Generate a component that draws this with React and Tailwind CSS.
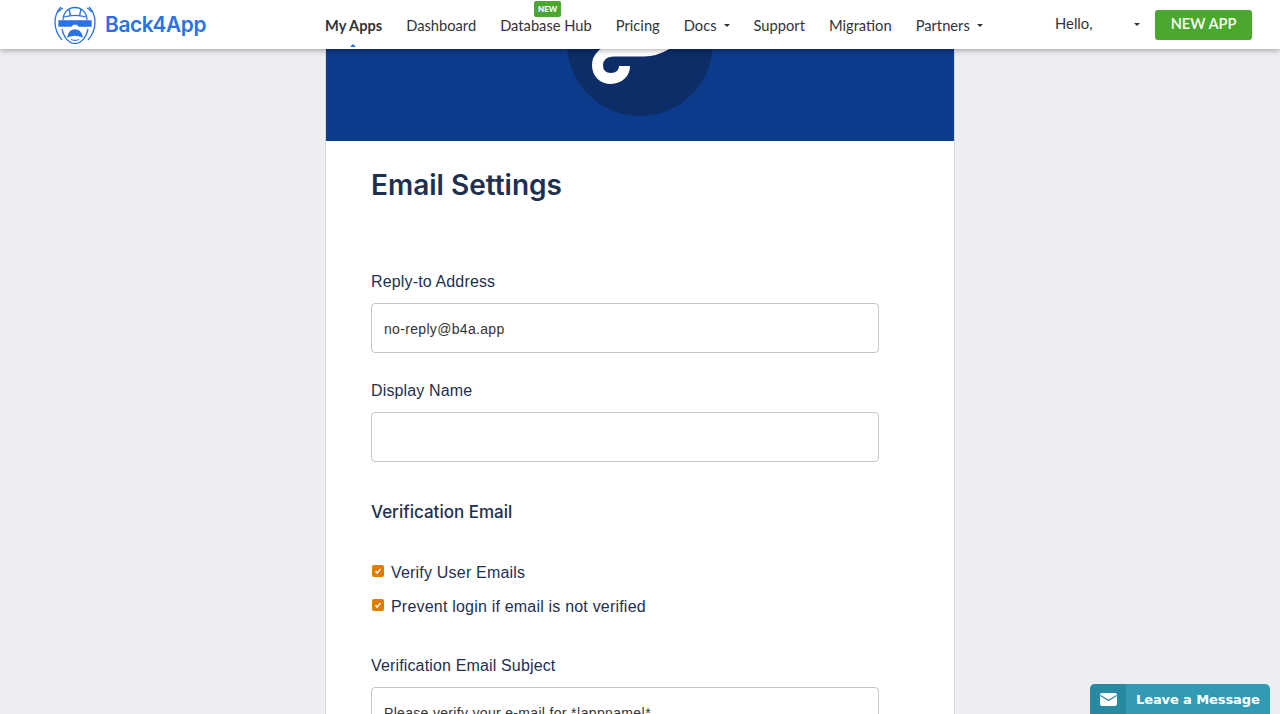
import React from "react";

const navLinks = [
  { label: "My Apps", active: true },
  { label: "Dashboard" },
  { label: "Database Hub", badge: true },
  { label: "Pricing" },
  { label: "Docs", caret: true },
  { label: "Support" },
  { label: "Migration" },
  { label: "Partners", caret: true },
];

const Caret = () => (
  <span className="inline-block w-0 h-0 border-x-[3px] border-x-transparent border-t-[3px] border-t-[#333]" />
);

const Logo = () => (
  <svg width="42" height="38" viewBox="0 0 42 38" fill="none" stroke="#2a72e5" strokeWidth="1.3">
    {/* outer arcs */}
    <path d="M7 1C3 5 1 10 1 16c0 7 2.500 13 7 18" />
    <path d="M35 1c4 4 6 9 6 15 0 7-2.500 13-7 18" />
    <path d="M4 6c2-2 3-3 5-4M38 6c-2-2-3-3-5-4" />
    {/* helmet dome */}
    <path d="M9 14C9 7 14 1.500 21 1.500S33 7 33 14" />
    <path d="M15 3l1.500 7M27 3l-1.500 7M10 11c7-2 15-2 22 0" />
    {/* visor */}
    <path d="M5 15h32v5H25l-2-2h-4l-2 2H5z" fill="#2a72e5" />
    {/* face */}
    <path d="M8 23c2 9 7 14.500 13 14.500S32 32 34 23" />
    <path d="M14 30.500c1-4 4-6.500 7-6.500s6 2.500 7 6.500c-3-.5-5-1.500-7-1.500s-4 1-7 1.500z" fill="#2a72e5" />
    <path d="M17 33.500c2 1 6 1 8 0" />
  </svg>
);

const Field = ({ label, value }) => (
  <div>
    <label className="block text-[16px] leading-[22px] tracking-[0.15px] text-[#1e3050]">{label}</label>
    <div className="mt-[10px] h-[50px] w-[508px] rounded-[4px] border border-[#c4c6c9] bg-white px-[12px] pt-[2px] flex items-center text-[14px] tracking-[0.32px] text-[#333]">
      {value}
    </div>
  </div>
);

const Check = ({ label }) => (
  <label className="flex items-center h-[24px] text-[16px] tracking-[0.2px] text-[#1e3050]">
    <span className="w-[12px] h-[12px] mb-[4px] ml-[1px] rounded-[2px] bg-[#e07b00] flex items-center justify-center mr-[7px]">
      <svg width="8" height="8" viewBox="0 0 8 8" fill="none" stroke="white" strokeWidth="1.5">
        <path d="M1.500 4.200L3.200 6L6.500 2" />
      </svg>
    </span>
    {label}
  </label>
);

export default function App() {
  return (
    <div className="h-[714px] overflow-hidden bg-[#edeef2] font-['Liberation_Sans',sans-serif]">
      <header className="relative z-10 h-[49px] bg-white shadow-[0_1px_6px_rgba(0,0,0,0.35)] flex items-center pl-[54px] pr-[28px]">
        <div className="w-[271px] flex items-center gap-[9px]">
          <Logo />
          <span className="font-['Inter',sans-serif] font-semibold text-[20.800px] text-[#2a72e5] tracking-[-0.3px]">Back4App</span>
        </div>
        <nav className="flex items-center gap-[24px] font-['Lato',sans-serif] text-[14.700px] text-[#333]">
          {navLinks.map((link) => (
            <a key={link.label} className={`relative flex items-center gap-[7px] h-[49px] pt-[2px] ${link.active ? "font-bold text-[14.600px]" : ""}`}>
              {link.label}
              {link.caret && <Caret />}
              {link.badge && (
                <span className="absolute top-[1px] left-[34px] w-[27px] h-[16px] rounded-[2px] bg-[#4ba82e] text-white text-[8px] font-black flex items-center justify-center">
                  NEW
                </span>
              )}
              {link.active && (
                <span className="absolute bottom-[2px] left-[25px] w-0 h-0 border-x-[3px] border-x-transparent border-b-[3px] border-b-[#2a72e5]" />
              )}
            </a>
          ))}
        </nav>
        <div className="ml-auto flex items-center">
          <span className="font-['Lato',sans-serif] text-[14.800px] text-[#333] w-[79px] pb-[2px]">Hello,</span>
          <Caret />
          <button className="ml-[15px] h-[30px] w-[97px] rounded-[3px] bg-[#4ba82e] text-white font-['Lato',sans-serif] font-semibold text-[14.600px] pb-[1px]">
            NEW APP
          </button>
        </div>
      </header>

      <main className="mx-auto w-[630px] h-[665px] bg-white border-x border-[#d6d8dc]">
        <div className="relative h-[92px] bg-[#0d3b8c] overflow-hidden">
          <div className="absolute left-[241px] top-[-79px] w-[146px] h-[146px] rounded-full bg-[#0c2d68]" />
          <svg className="absolute left-[263px] top-0" width="90" height="40" viewBox="0 0 90 40" fill="none" stroke="white" strokeWidth="11">
            <path d="M85-10C75-2 65 2 55 2H25C14 2 8.500 9 8.500 16c0 8 5.500 13.500 13.500 13.500S35.500 24 35.500 17" />
          </svg>
        </div>
        <div className="pl-[45px] pt-[26px]">
          <h1 className="font-['Inter',sans-serif] font-semibold text-[28px] leading-[36px] text-[#1e3050]">Email Settings</h1>
          <div className="mt-[68px] flex flex-col gap-[27px]">
            <Field label="Reply-to Address" value="no-reply@b4a.app" />
            <Field label="Display Name" />
          </div>
          <h2 className="mt-[39px] font-['Inter',sans-serif] font-medium text-[17px] leading-[22px] text-[#1e3050]">Verification Email</h2>
          <div className="mt-[38px] flex flex-col gap-[10px]">
            <Check label="Verify User Emails" />
            <Check label="Prevent login if email is not verified" />
          </div>
          <div className="mt-[36px]">
            <Field label="Verification Email Subject" value="Please verify your e-mail for *|appname|*" />
          </div>
        </div>
      </main>

      <div className="fixed right-[10px] bottom-0 w-[180px] h-[30px] rounded-t-[5px] bg-[#339ab3] overflow-hidden flex items-center text-white font-['DejaVu_Sans',sans-serif] font-bold text-[13px] tracking-[-0.1px]">
        <span className="w-[36px] h-full bg-[#278aa1] flex items-center justify-center">
          <svg width="17" height="13" viewBox="0 0 17 13">
            <rect width="17" height="13" rx="2" fill="white" />
            <path d="M0.500 2.500L8.500 7.500L16.500 2.500" fill="none" stroke="#278aa1" strokeWidth="1.200" />
          </svg>
        </span>
        <span className="ml-[10px] pt-[2px]">Leave a Message</span>
      </div>
    </div>
  );
}
